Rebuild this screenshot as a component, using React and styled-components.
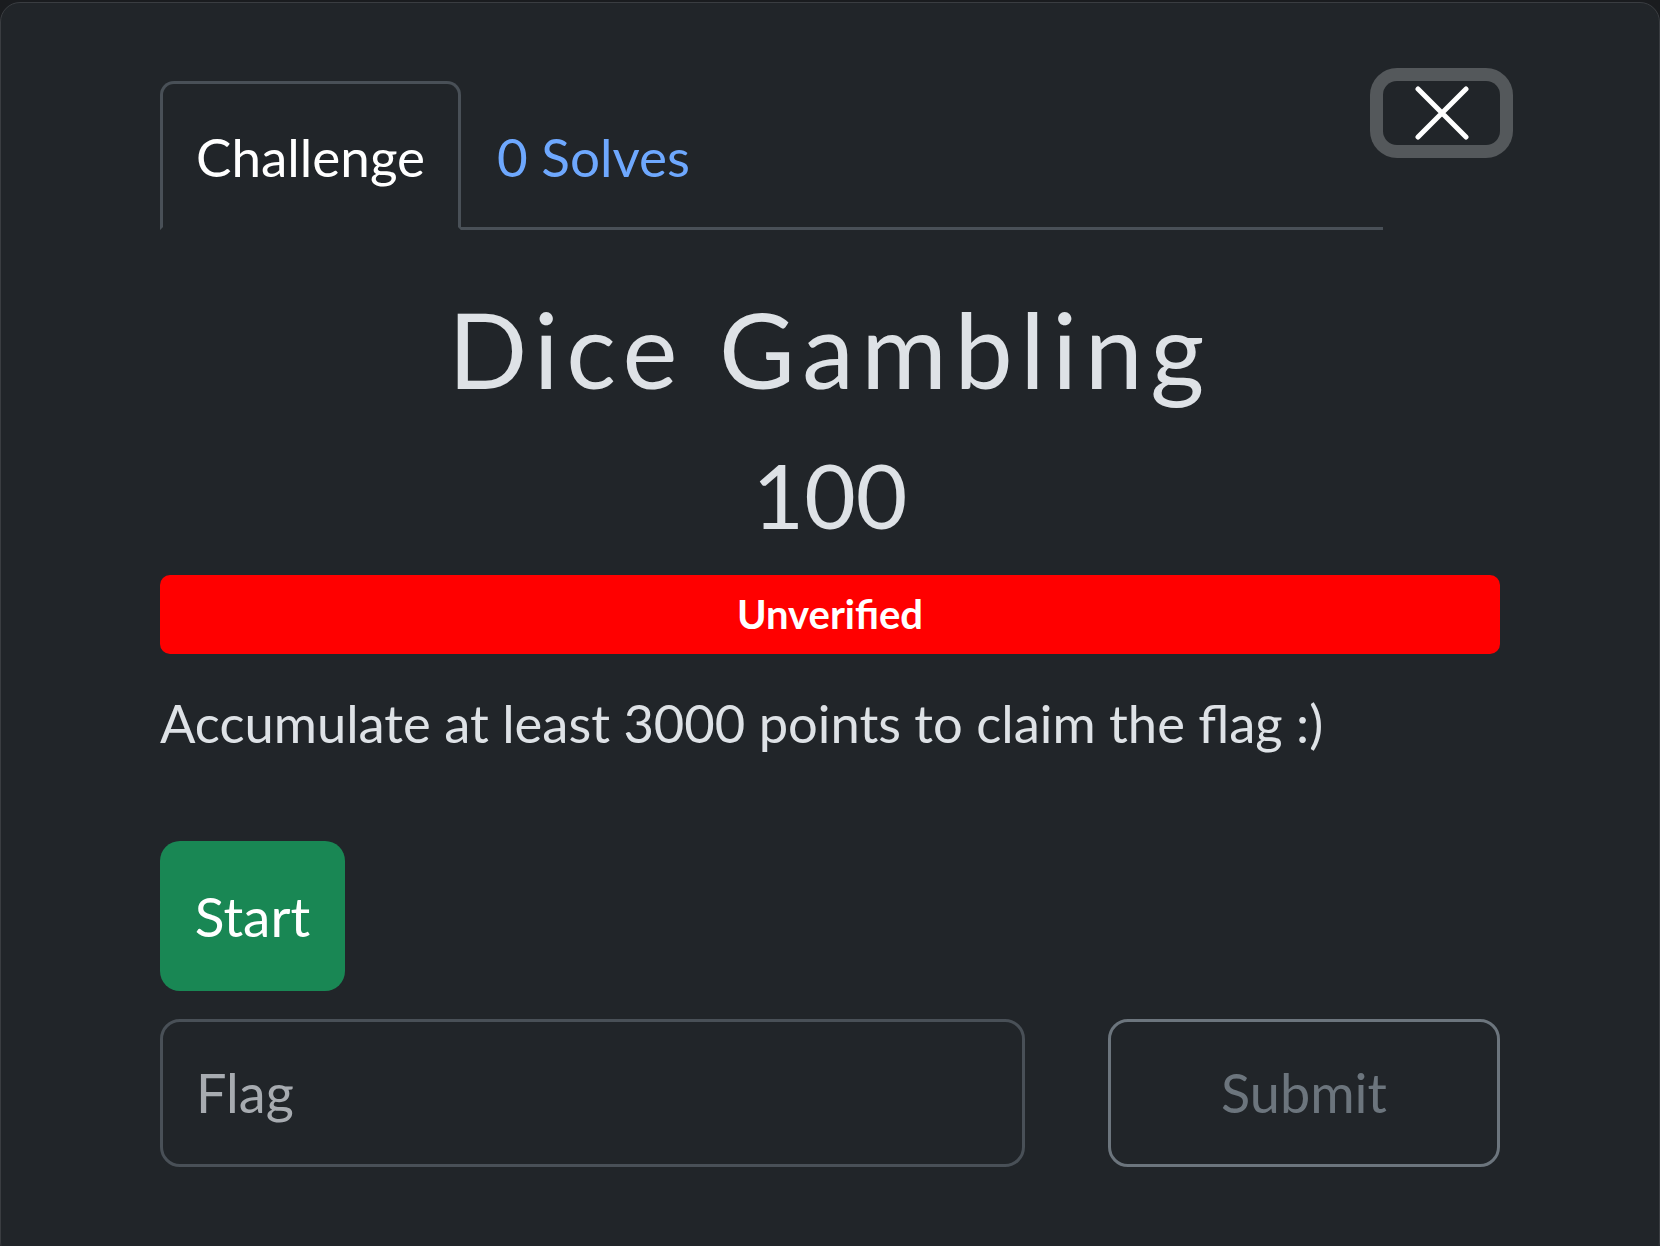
import React from "react"
import styled, { createGlobalStyle } from "styled-components"

const GlobalStyle = createGlobalStyle`
  html, body {
    margin: 0;
    padding: 0;
    background: #1a1c1f;
    overflow: hidden;
  }
  body {
    font-family: Lato, "Open Sans", "Liberation Sans", sans-serif;
    color: #dee2e6;
  }
`

const Modal = styled.div`
  margin-top: 2px;
  height: 1260px;
  background: #212529;
  border: 1px solid #3a3d41;
  border-radius: 20px;
  box-sizing: border-box;
  padding: 78px 159px 0;
`

const Header = styled.div`
  display: flex;
  align-items: flex-start;
`

const Tabs = styled.nav`
  flex: 1;
  display: flex;
  align-items: flex-end;
  border-bottom: 3px solid #495057;
`

const Tab = styled.div`
  font-size: 53px;
  line-height: 64px;
  padding: 41px 33px 38px;
  margin-bottom: -3px;
  border: 3px solid ${({ active }) => (active ? "#495057" : "transparent")};
  border-bottom: 3px solid ${({ active }) => (active ? "#212529" : "transparent")};
  border-radius: 14px 14px 0 0;
  color: ${({ active }) => (active ? "#ffffff" : "#6ea8fe")};
`

const CloseButton = styled.button`
  width: 117px;
  height: 64px;
  background: transparent;
  border: none;
  border-radius: 14px;
  box-shadow: 0 0 0 13px #54585b;
  display: flex;
  align-items: center;
  justify-content: center;
  padding: 0;
`

const Title = styled.h2`
  margin: 53px 0 0;
  font-size: 104px;
  font-weight: 400;
  line-height: 131px;
  letter-spacing: 7.5px;
  text-align: center;
`

const Value = styled.h3`
  margin: 28px 0 0;
  font-size: 89px;
  font-weight: 400;
  line-height: 1.2;
  text-align: center;
`

const Badge = styled.div`
  margin-top: 26px;
  height: 79px;
  background: #ff0000;
  border-radius: 10px;
  display: flex;
  align-items: center;
  justify-content: center;
  color: #fff;
  font-weight: 700;
  font-size: 40px;
`

const Description = styled.p`
  margin: 37px 0 0;
  font-size: 52.5px;
  line-height: 1.2;
`

const StartButton = styled.button`
  margin-top: 87px;
  width: 185px;
  height: 150px;
  border: none;
  border-radius: 20px;
  background: #198754;
  color: #fff;
  font-family: inherit;
  font-size: 55px;
  padding: 0;
`

const FlagRow = styled.div`
  margin-top: 28px;
  display: grid;
  grid-template-columns: 865px 1fr 392px;
  height: 148px;
`

const FlagInput = styled.input`
  grid-column: 1;
  box-sizing: border-box;
  height: 100%;
  border: 3px solid #495057;
  border-radius: 20px;
  background: transparent;
  padding: 0 33px;
  font-family: inherit;
  font-size: 54px;
  color: #dee2e6;
  outline: none;
  &::placeholder {
    color: #a7abb0;
  }
`

const SubmitButton = styled.button`
  grid-column: 3;
  box-sizing: border-box;
  height: 100%;
  border: 3px solid #6c757d;
  border-radius: 20px;
  background: transparent;
  font-family: inherit;
  font-size: 54px;
  color: #6c757d;
`

export default function App() {
  return (
    <>
      <GlobalStyle />
      <Modal>
        <Header>
          <Tabs>
            <Tab active>Challenge</Tab>
            <Tab>0 Solves</Tab>
          </Tabs>
          <CloseButton aria-label="Close">
            <svg width="54" height="54" viewBox="0 0 54 54">
              <path d="M3 3 L51 51 M51 3 L3 51" stroke="#fff" strokeWidth="5" strokeLinecap="round" />
            </svg>
          </CloseButton>
        </Header>
        <Title>Dice Gambling</Title>
        <Value>100</Value>
        <Badge>Unverified</Badge>
        <Description>Accumulate at least 3000 points to claim the flag :)</Description>
        <StartButton>Start</StartButton>
        <FlagRow>
          <FlagInput placeholder="Flag" />
          <SubmitButton disabled>Submit</SubmitButton>
        </FlagRow>
      </Modal>
    </>
  )
}
